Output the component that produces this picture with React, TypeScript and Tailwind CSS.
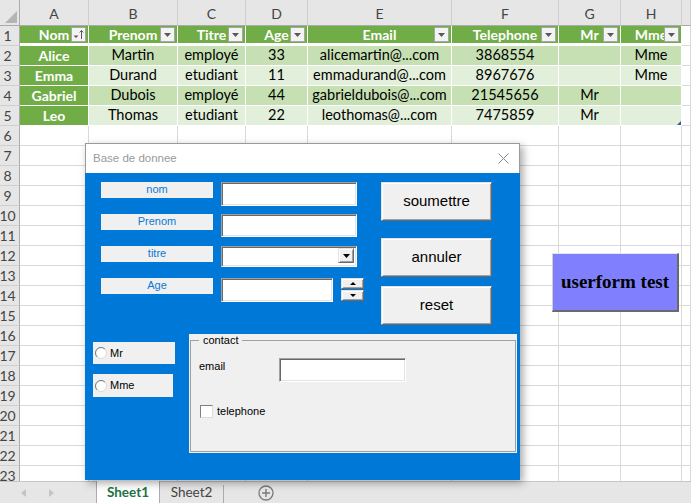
import React from "react";

const HEAD = ["Nom", "Prenom", "Titre", "Age", "Email", "Telephone", "Mr", "Mme"];
const DATA = [
  ["Alice", "Martin", "employé", "33", "alicemartin@...com", "3868554", "", "Mme"],
  ["Emma", "Durand", "etudiant", "11", "emmadurand@...com", "8967676", "", "Mme"],
  ["Gabriel", "Dubois", "employé", "44", "gabrieldubois@...com", "21545656", "Mr", ""],
  ["Leo", "Thomas", "etudiant", "22", "leothomas@...com", "7475859", "Mr", ""],
];
const LETTERS = ["A", "B", "C", "D", "E", "F", "G", "H", ""];
const ROWS = Array.from({ length: 23 }, (_, i) => i + 1);

const SUNKEN =
  "bg-white border border-t-[#a0a0a0] border-l-[#a0a0a0] border-b-white border-r-white shadow-[inset_1px_1px_0_#696969,inset_-1px_-1px_0_#e3e3e3]";
const RAISED =
  "bg-[#f0f0f0] border border-t-[#e3e3e3] border-l-[#e3e3e3] border-b-[#696969] border-r-[#696969] shadow-[inset_1px_1px_0_#ffffff,inset_-1px_-1px_0_#a0a0a0]";

function FilterBtn({ sort }: { sort?: boolean }) {
  return (
    <div className="absolute right-[2px] top-[1px] w-[15px] h-[15px] bg-[#f3f3f3] border border-[#a6a6a6] flex items-center justify-center">
      {sort ? (
        <svg width="13" height="13" viewBox="0 0 13 13">
          <path d="M1.5 7.5h5L4 10z" fill="#595959" />
          <path d="M9.5 2.5v8.5" stroke="#595959" strokeWidth="1" />
          <path d="M7.7 4.4 9.5 2.5 11.3 4.4" stroke="#595959" strokeWidth="1" fill="none" />
        </svg>
      ) : (
        <svg width="7" height="4" viewBox="0 0 7 4">
          <path d="M0 0h7L3.5 4z" fill="#595959" />
        </svg>
      )}
    </div>
  );
}

function Cell({ r, c }: { r: number; c: number }) {
  if (c < 8 && r === 1) {
    return (
      <div className="relative overflow-hidden bg-[#70ad47] border-r border-r-white border-b-[3px] border-b-white flex items-center justify-center text-white font-bold text-[14px] leading-none">
        <span>{HEAD[c]}</span>
        <FilterBtn sort={c === 0} />
      </div>
    );
  }
  if (c < 8 && r >= 2 && r <= 5) {
    const txt = DATA[r - 2][c];
    if (c === 0) {
      return (
        <div className="bg-[#70ad47] border-r border-b border-white flex items-center justify-center text-white font-bold text-[14px] leading-none">
          {txt}
        </div>
      );
    }
    return (
      <div
        className={
          r % 2 === 0
            ? "relative bg-[#c6e0b4] border-r border-b border-white flex items-center justify-center text-black text-[14.5px] leading-none whitespace-nowrap"
            : "relative bg-[#e2efda] border-r border-b border-white flex items-center justify-center text-black text-[14.5px] leading-none whitespace-nowrap"
        }
      >
        {txt}
        {r === 5 && c === 7 ? (
          <svg className="absolute right-[0px] bottom-[0px]" width="4" height="4" viewBox="0 0 4 4">
            <path d="M4 0V4H0z" fill="#2e5c9e" />
          </svg>
        ) : null}
      </div>
    );
  }
  return <div className="border-r border-b border-[#d9d9d9]" />;
}

function Sheet() {
  return (
    <div className="h-[481px] overflow-hidden">
      <div className="grid grid-cols-[20px_69px_89px_68px_62px_144px_107px_62px_61px_1fr] h-[26px]">
        <div className="relative bg-[#e6e6e6] border-r border-b border-r-[#ababab] border-b-[#ababab]">
          <svg className="absolute right-[2px] bottom-[2px]" width="12" height="12" viewBox="0 0 12 12">
            <path d="M12 0V12H0z" fill="#b4b4b4" />
          </svg>
        </div>
        {LETTERS.map((l, i) => (
          <div
            key={i}
            className="bg-[#e6e6e6] border-r border-b border-r-[#cfcfcf] border-b-[#ababab] flex items-center justify-center pt-[2px] text-[14px] text-[#444]"
          >
            {l}
          </div>
        ))}
      </div>
      {ROWS.map((r) => (
        <div key={r} className="grid grid-cols-[20px_69px_89px_68px_62px_144px_107px_62px_61px_1fr] h-[20px]">
          <div className="bg-[#e6e6e6] border-r border-b border-r-[#ababab] border-b-[#cfcfcf] flex items-center justify-center pr-[4px] text-[14px] text-[#444] leading-none">
            {r}
          </div>
          {LETTERS.map((_, c) => (
            <Cell key={c} r={r} c={c} />
          ))}
        </div>
      ))}
    </div>
  );
}

function TabBar() {
  return (
    <div className="h-[22px] bg-[#e6e6e6] border-t border-[#c6c6c6] flex items-stretch text-[13.5px]">
      <div className="w-[96px] flex items-center">
        <svg className="ml-[21px]" width="5" height="8" viewBox="0 0 5 8">
          <path d="M5 0V8L0 4z" fill="#c4c4c4" />
        </svg>
        <svg className="ml-[23px]" width="5" height="8" viewBox="0 0 5 8">
          <path d="M0 0V8L5 4z" fill="#c4c4c4" />
        </svg>
      </div>
      <div className="w-[64px] -mt-px bg-white border-x border-[#ababab] flex items-center justify-center font-bold text-[#217346]">
        Sheet1
      </div>
      <div className="w-[63px] flex items-center justify-center text-[#444]">Sheet2</div>
      <div className="w-px h-[18px] self-end bg-[#ababab]" />
      <div className="flex items-center ml-[34px]">
        <svg width="16" height="16" viewBox="0 0 16 16">
          <circle cx="8" cy="8" r="7" fill="none" stroke="#7a7a7a" strokeWidth="1.3" />
          <path d="M8 4v8M4 8h8" stroke="#7a7a7a" strokeWidth="1.4" />
        </svg>
      </div>
    </div>
  );
}

function FLabel({ children }: { children: React.ReactNode }) {
  return (
    <div className="w-[112px] h-[16px] shrink-0 bg-[#f0f0f0] text-[#0a78d4] text-[11px] leading-[15px] text-center">
      {children}
    </div>
  );
}

function Tri({ up, w = 7, h = 4 }: { up?: boolean; w?: number; h?: number }) {
  return (
    <svg width={w} height={h} viewBox={`0 0 ${w} ${h}`}>
      <path d={up ? `M0 ${h}h${w}L${w / 2} 0z` : `M0 0h${w}L${w / 2} ${h}z`} fill="#000" />
    </svg>
  );
}

function RadioIcon() {
  return (
    <svg width="12" height="12" viewBox="0 0 12 12">
      <circle cx="6" cy="6" r="5.5" fill="#fff" stroke="#d8d8d8" />
      <path d="M2.1 9.9A5.5 5.5 0 0 1 9.9 2.1" fill="none" stroke="#7a7a7a" />
    </svg>
  );
}

function UserForm() {
  return (
    <div className="absolute left-[85px] top-[143px] w-[435px] h-[337px] shadow-[3px_3px_8px_rgba(0,0,0,0.35)] flex flex-col font-['Liberation_Sans',Arial,sans-serif]">
      <div className="h-[30px] bg-white border-t border-l border-r border-[#9a9a9a] flex items-center justify-between pl-[7px] pr-[10px]">
        <span className="text-[11.5px] text-[#9a9a9a]">Base de donnee</span>
        <svg width="11" height="11" viewBox="0 0 11 11">
          <path d="M0.5 0.5l10 10M10.5 0.5l-10 10" stroke="#8a8a8a" strokeWidth="1" />
        </svg>
      </div>
      <div className="flex-1 bg-[#0078d7] flex flex-col">
        <div className="mt-[9px] ml-[16px] flex">
          <div className="w-[256px] shrink-0 flex flex-col">
            <div className="h-[32px] flex items-start gap-[8px]">
              <FLabel>nom</FLabel>
              <div className={`w-[136px] h-[24px] shrink-0 ${SUNKEN}`} />
            </div>
            <div className="h-[32px] flex items-start gap-[8px]">
              <FLabel>Prenom</FLabel>
              <div className={`w-[136px] h-[23px] shrink-0 ${SUNKEN}`} />
            </div>
            <div className="h-[32px] flex items-start gap-[8px]">
              <FLabel>titre</FLabel>
              <div className={`w-[136px] h-[21px] shrink-0 flex items-start justify-end pt-[1px] pr-[2px] ${SUNKEN}`}>
                <div className={`w-[16px] h-[15px] flex items-center justify-center ${RAISED}`}>
                  <Tri />
                </div>
              </div>
            </div>
            <div className="h-[32px] flex items-start gap-[8px]">
              <FLabel>Age</FLabel>
              <div className={`w-[112px] h-[24px] shrink-0 ${SUNKEN}`} />
              <div className="flex flex-col gap-px shrink-0">
                <div className={`w-[23px] h-[11px] flex items-center justify-center ${RAISED}`}>
                  <Tri up w={6} h={3} />
                </div>
                <div className={`w-[23px] h-[11px] flex items-center justify-center ${RAISED}`}>
                  <Tri w={6} h={3} />
                </div>
              </div>
            </div>
          </div>
          <div className="ml-[24px] flex flex-col text-[15px] text-black">
            <div className={`w-[111px] h-[39px] flex items-center justify-center ${RAISED}`}>soumettre</div>
            <div className={`mt-[17px] w-[111px] h-[39px] flex items-center justify-center ${RAISED}`}>annuler</div>
            <div className={`mt-[9px] w-[111px] h-[39px] flex items-center justify-center ${RAISED}`}>reset</div>
          </div>
        </div>
        <div className="mt-[9px] ml-[8px] flex items-start text-[11px] text-black">
          <div className="mt-[8px] w-[82px] flex flex-col">
            <div className="w-[82px] h-[22px] bg-[#f0f0f0] flex items-center pl-[2px] gap-[3px]">
              <RadioIcon />
              <span>Mr</span>
            </div>
            <div className="mt-[10px] w-[80px] h-[23px] bg-[#f0f0f0] flex items-center pl-[2px] gap-[3px]">
              <RadioIcon />
              <span>Mme</span>
            </div>
          </div>
          <div className="ml-[14px] w-[328px] h-[119px] bg-[#f0f0f0]">
            <fieldset className="mx-[1px] h-[118px] border border-[#a0a0a0]">
              <legend className="ml-[8px] px-[4px] leading-[13px]">contact</legend>
              <div className="mt-[11px] ml-[8px] flex items-start">
                <div className="w-[80px]">email</div>
                <div className={`w-[127px] h-[24px] ${SUNKEN}`} />
              </div>
              <div className="mt-[21px] ml-[9px] flex items-center gap-[4px]">
                <div className="w-[13px] h-[13px] bg-white border border-t-[#808080] border-l-[#808080] border-b-[#dcdcdc] border-r-[#dcdcdc]" />
                <span>telephone</span>
              </div>
            </fieldset>
          </div>
        </div>
      </div>
    </div>
  );
}

function TestButton() {
  return (
    <div className="absolute left-[552px] top-[253px] w-[127px] h-[59px] bg-[#8080ff] border-t border-l border-t-[#e6e6e6] border-l-[#d0d0d0] border-b-2 border-r-2 border-b-[#6a6a6a] border-r-[#6a6a6a] flex items-center justify-center font-['Liberation_Serif',serif] font-bold text-[19px] text-black">
      userform test
    </div>
  );
}

export default function App() {
  return (
    <div className="relative w-[691px] h-[503px] overflow-hidden bg-white font-['Lato',sans-serif]">
      <Sheet />
      <TabBar />
      <UserForm />
      <TestButton />
    </div>
  );
}
